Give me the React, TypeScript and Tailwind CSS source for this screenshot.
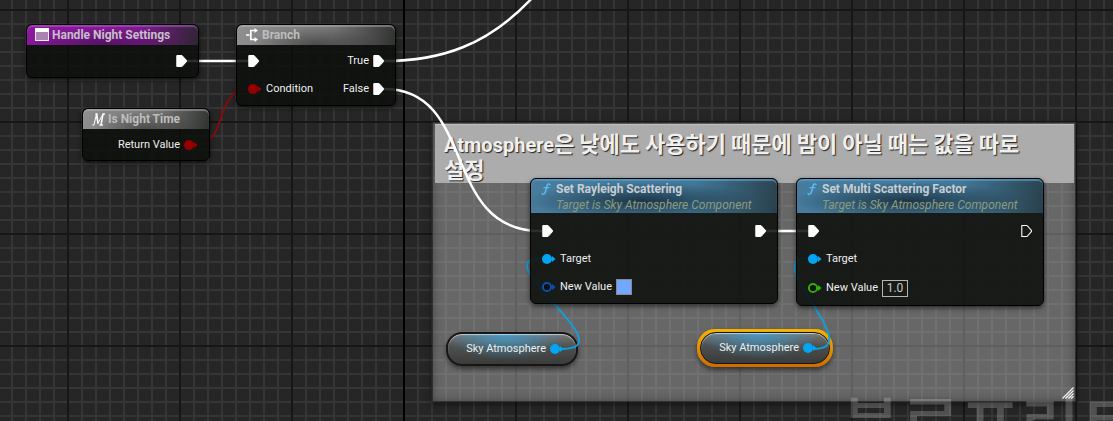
import React from 'react';

const GRID =
  'bg-[#262626] [background-image:linear-gradient(90deg,#000_2px,transparent_2px),linear-gradient(90deg,#161616_2px,transparent_2px),linear-gradient(#161616_2px,transparent_2px),linear-gradient(90deg,#353535_2px,transparent_2px),linear-gradient(#353535_2px,transparent_2px)] [background-size:1200px_100%,112px_112px,112px_112px,14px_14px,14px_14px] [background-position:403px_0,67px_9px,67px_9px,11px_9px,11px_9px]';

const BODY = 'bg-[#0c0f0c]/87';
const LABEL = 'text-[11px] leading-4 text-[#eeeeee] whitespace-nowrap';

function ExecPin({ hollow = false }: { hollow?: boolean }) {
  return (
    <svg width="12" height="14" viewBox="0 0 12 14" className="shrink-0" aria-hidden="true">
      <path
        d="M0.8 1.5H6L10.4 6.3V7.7L6 12.5H0.8Z"
        fill={hollow ? 'none' : '#fff'}
        stroke="#fff"
        strokeWidth={hollow ? 1.1 : 1}
        strokeLinejoin="round"
      />
    </svg>
  );
}

function DataPin({ color, hollow = false }: { color: string; hollow?: boolean }) {
  return (
    <svg width="14" height="12" viewBox="0 0 14 12" className="shrink-0" aria-hidden="true">
      <circle cx="5" cy="6" r={hollow ? 4.1 : 5} fill={hollow ? '#0d100d' : color} stroke={color} strokeWidth={hollow ? 2 : 0} />
      <path d="M10 3L13.6 6L10 9Z" fill={color} />
    </svg>
  );
}

function EventIcon() {
  return (
    <svg width="14" height="14" viewBox="0 0 14 14" aria-hidden="true">
      <rect x="0.5" y="0.5" width="13" height="12" fill="#ab83b1" stroke="#f4eef5" />
      <rect width="14" height="4" fill="#fff" />
    </svg>
  );
}

function BranchIcon() {
  return (
    <svg width="13" height="14" viewBox="0 0 13 14" fill="none" stroke="#fff" strokeWidth="1.7" aria-hidden="true">
      <path d="M0 7H3M9 2.5H4.8V11.5H9M4.8 7H3.5" />
      <path d="M8.5 0L12 2.5L8.5 5ZM8.5 9L12 11.5L8.5 14Z" fill="#fff" stroke="none" />
    </svg>
  );
}

function MacroIcon() {
  return (
    <svg width="13" height="13" viewBox="0 0 13 13" fill="none" stroke="#fff" strokeLinecap="round" strokeLinejoin="round" aria-hidden="true">
      <path d="M0.7 12H2L4.4 1.2L5.8 10.5L11 1.2" strokeWidth="1" />
      <path d="M11 1.2L9 12M8 12H10.4M4 1H5M11 1H12.4" strokeWidth="1.5" />
      <path d="M4.6 1.4L6 10" strokeWidth="1.6" />
    </svg>
  );
}

function FunctionIcon() {
  return (
    <svg width="10" height="12" viewBox="0 0 10 12" fill="none" stroke="#5cb8f0" strokeLinecap="round" aria-hidden="true">
      <path d="M9 1.6C7.6 0.3 6.4 1 6 2.8L4.5 8.8C4 10.9 2.6 11.8 1 10.7" strokeWidth="1.5" />
      <path d="M2.8 4.6H8" strokeWidth="1.1" />
    </svg>
  );
}

function Node({ place, header, children }: { place: string; header: React.ReactNode; children: React.ReactNode }) {
  return (
    <section
      className={`absolute flex flex-col overflow-hidden rounded-md border border-black ${BODY} shadow-[0_2px_5px_rgba(0,0,0,0.6)] ${place}`}
    >
      {header}
      {children}
    </section>
  );
}

const TITLE = 'text-xs leading-4 font-bold font-[Roboto,sans-serif] whitespace-nowrap';
const GREY_HEADER =
  'flex h-5 items-center rounded-t-[5px] bg-[radial-gradient(ellipse_at_50%_100%,rgba(40,40,40,0.55),transparent_60%),linear-gradient(100deg,#8f8f8f,#747474_60%,#303230)] shadow-[inset_0_2px_1px_rgba(190,190,190,0.45)]';
const BLUE_HEADER =
  'flex h-[34px] items-start gap-1 rounded-t-[5px] pl-2.5 pt-0.5 bg-[radial-gradient(ellipse_at_45%_65%,rgba(22,42,56,0.85),transparent_60%),linear-gradient(100deg,#477c9d,#427898_65%,#29404c)] shadow-[inset_0_2px_1px_rgba(90,160,205,0.7)]';

function SetterNode({ place, title, children }: { place: string; title: string; children: React.ReactNode }) {
  return (
    <Node
      place={place}
      header={
        <header className={BLUE_HEADER}>
          <span className="pt-0.5">
            <FunctionIcon />
          </span>
          <div className="pl-px">
            <h2 className={`${TITLE} text-[#c8cdd1]`}>{title}</h2>
            <p className="text-xs leading-4 italic text-[#8d9b7c] whitespace-nowrap">Target is Sky Atmosphere Component</p>
          </div>
        </header>
      }
    >
      {children}
    </Node>
  );
}

function VariableNode({ place, selected = false }: { place: string; selected?: boolean }) {
  return (
    <div
      className={`absolute rounded-[18px] ${selected ? 'bg-linear-to-b from-[#f5b400] to-[#d06a00] p-[3px]' : ''} shadow-[0_3px_5px_rgba(0,0,0,0.5)] ${place}`}
    >
      <div
        className={`flex items-center justify-end gap-1 rounded-2xl border-[#181614] bg-[#454947] bg-[radial-gradient(ellipse_at_45%_0%,rgba(64,158,208,0.85),transparent_60%),linear-gradient(#777,#4b4f4e_45%,#3a3c3b)] shadow-[inset_0_1px_1px_rgba(255,255,255,0.6)] ${
          selected ? 'h-8 w-[130px] border pr-3' : 'h-[34px] w-[132px] border-2 pr-3'
        }`}
      >
        <span className={LABEL}>Sky Atmosphere</span>
        <DataPin color="#00a6f4" />
      </div>
    </div>
  );
}

export default function App() {
  return (
    <main className={`relative h-screen min-h-[421px] overflow-hidden font-[Roboto,'Noto_Sans_CJK_KR',sans-serif] ${GRID}`}>
      <section className="absolute left-[432px] top-[122px] h-[280px] w-[644px] border border-[#303030] bg-[#b8b8b8]/45 p-px pl-0.5 shadow-[0_2px_6px_rgba(0,0,0,0.6),inset_0_0_8px_rgba(0,0,0,0.35)]">
        <h1 className="h-[59px] bg-[#acacac] pt-[5px] pl-[9px] font-['Noto_Sans_CJK_KR',sans-serif] text-[22px] leading-[26px] font-bold text-[#f0f0f0] shadow-[inset_0_1px_0_#c0c0c0] [text-shadow:1px_1px_1px_#222] break-keep">
          <span className="font-[Roboto,sans-serif] text-xl leading-none">Atmosphere</span>은 낮에도 사용하기 때문에 밤이 아닐 때는 값을 따로
          <br />
          설정
        </h1>
        <svg width="12" height="12" viewBox="0 0 12 12" className="absolute right-px bottom-0.5" stroke="#f2f2f2" strokeWidth="1.3" aria-hidden="true">
          <path d="M0.5 11.5L11.5 0.5M3.5 11.5L11.5 3.5M6.5 11.5L11.5 6.5M9.3 11.5L11.5 9.3" />
        </svg>
      </section>

      <p className="absolute left-[841px] top-[393px] font-['Noto_Sans_CJK_KR',sans-serif] text-[65px] leading-[60px] font-medium whitespace-nowrap text-white/20">
        블루프린트
      </p>

      <VariableNode place="left-[446px] top-[332px]" />
      <VariableNode place="left-[697px] top-[329px]" selected />

      <svg className="absolute left-0 top-0 h-[421px] w-[1113px]" fill="none" strokeLinecap="round" aria-hidden="true">
        <g stroke="#fff" strokeWidth="2.5">
          <path d="M187 61H248" />
          <path d="M384 61C440 61 488 46 534 -4" />
          <path d="M384 89C478 89 440 231 541 231" />
          <path d="M766 231H808" />
        </g>
        <path d="M196 145C228 145 214 89 248 89" stroke="#8a0a0a" strokeWidth="1.8" />
        <g stroke="#109fe0" strokeWidth="1.8">
          <path d="M562 349C627 349 482 258 542 258" />
          <path d="M814 349C868 349 758 258 808 258" />
        </g>
      </svg>

      <Node
        place="left-[26px] top-[24px] h-[54px] w-[173px]"
        header={
          <header className="flex h-5 items-center gap-[3px] rounded-t-[5px] bg-[radial-gradient(ellipse_at_45%_100%,rgba(40,10,50,0.5),transparent_60%),linear-gradient(100deg,#8a189c,#7c1b8e_65%,#2e2532)] pl-2 shadow-[inset_0_2px_1px_rgba(180,110,195,0.5)]">
            <EventIcon />
            <h2 className={`${TITLE} text-[#c8bfca]`}>Handle Night Settings</h2>
          </header>
        }
      >
        <div className="flex justify-end pt-[9px] pr-2.5">
          <ExecPin />
        </div>
      </Node>

      <Node
        place="left-[236px] top-[24px] h-[82px] w-[160px]"
        header={
          <header className={`${GREY_HEADER} gap-[3px] pl-[9px]`}>
            <BranchIcon />
            <h2 className={`${TITLE} text-[#bdbdbd]`}>Branch</h2>
          </header>
        }
      >
        <div className="flex flex-col gap-3 pt-2 pr-2.5 pl-[11px]">
          <div className="flex h-4 items-center gap-1">
            <ExecPin />
            <span className={`${LABEL} ml-auto`}>True</span>
            <ExecPin />
          </div>
          <div className="flex h-4 items-center gap-1">
            <DataPin color="#960000" />
            <span className={LABEL}>Condition</span>
            <span className={`${LABEL} ml-auto`}>False</span>
            <ExecPin />
          </div>
        </div>
      </Node>

      <Node
        place="left-[82px] top-[108px] h-[53px] w-[128px]"
        header={
          <header className={`${GREY_HEADER} gap-[3px] pl-[9px]`}>
            <MacroIcon />
            <h2 className={`${TITLE} text-[#bdbdbd]`}>Is Night Time</h2>
          </header>
        }
      >
        <div className="flex items-center justify-end gap-1 pt-2 pr-[11px]">
          <span className={LABEL}>Return Value</span>
          <DataPin color="#960000" />
        </div>
      </Node>

      <SetterNode place="left-[530px] top-[178px] h-[126px] w-[248px]" title="Set Rayleigh Scattering">
        <div className="flex flex-col gap-3 pt-2.5 pr-2.5 pl-[11px]">
          <div className="flex h-4 items-center justify-between">
            <ExecPin />
            <ExecPin />
          </div>
          <div className="flex h-4 items-center gap-1">
            <DataPin color="#00a6f4" />
            <span className={LABEL}>Target</span>
          </div>
          <div className="flex h-4 items-center gap-1">
            <DataPin color="#0a4fae" hollow />
            <span className={LABEL}>New Value</span>
            <button type="button" aria-label="New Value color" className="size-4 border border-[#8a8a8a] bg-[#74a8ff]" />
          </div>
        </div>
      </SetterNode>

      <SetterNode place="left-[796px] top-[178px] h-[128px] w-[248px]" title="Set Multi Scattering Factor">
        <div className="flex flex-col gap-3 pt-2.5 pr-2.5 pl-[11px]">
          <div className="flex h-4 items-center justify-between">
            <ExecPin />
            <ExecPin hollow />
          </div>
          <div className="flex h-4 items-center gap-1">
            <DataPin color="#00a6f4" />
            <span className={LABEL}>Target</span>
          </div>
          <div className="flex h-[18px] items-center gap-1">
            <DataPin color="#2fae0a" hollow />
            <label htmlFor="factor" className={LABEL}>
              New Value
            </label>
            <input id="factor" defaultValue="1.0" className="h-[17px] w-[26px] border border-[#b5b5b5] bg-transparent text-center text-xs text-[#c8c8c8]" />
          </div>
        </div>
      </SetterNode>
    </main>
  );
}
